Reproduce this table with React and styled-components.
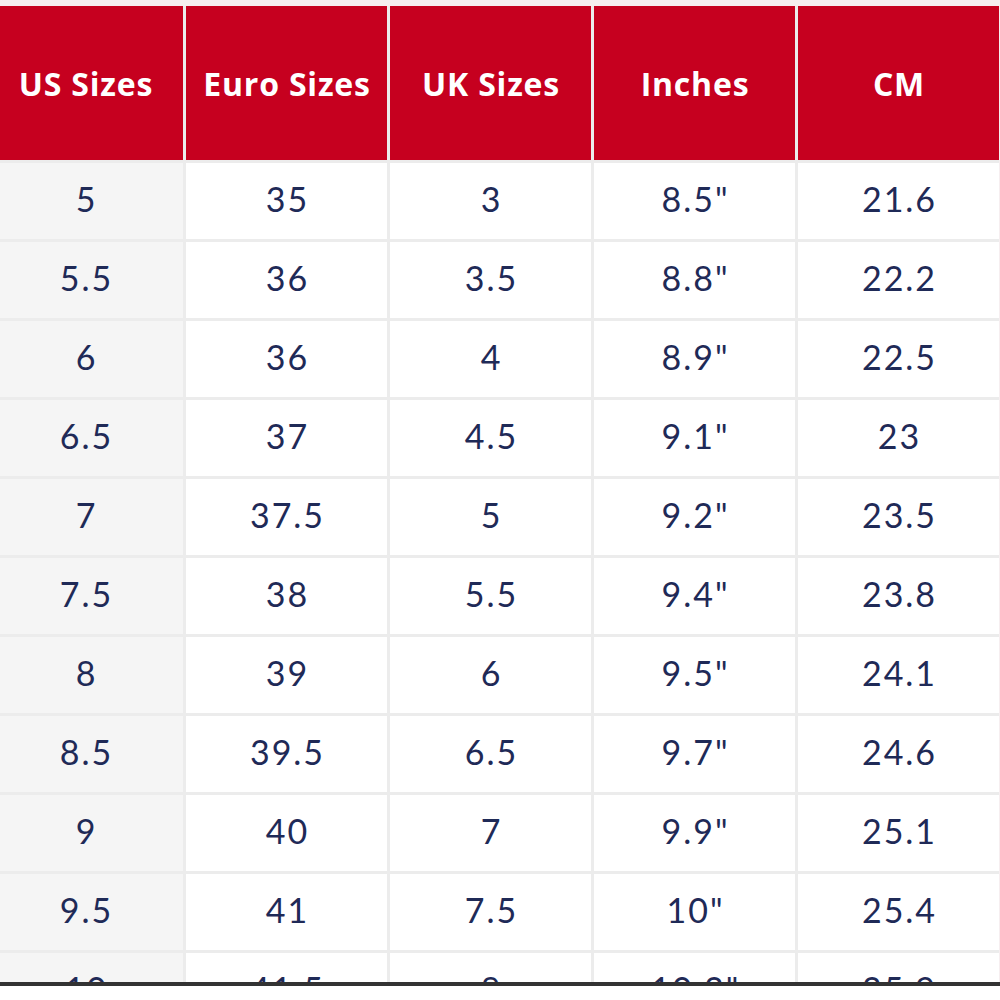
import React from 'react';
import styled, { createGlobalStyle } from 'styled-components';

const GlobalStyle = createGlobalStyle`
  html, body {
    margin: 0;
    padding: 0;
    background: #ffffff;
  }
`;

const headers = ['US Sizes', 'Euro Sizes', 'UK Sizes', 'Inches', 'CM'];

const rows = [
  ['5', '35', '3', '8.5"', '21.6'],
  ['5.5', '36', '3.5', '8.8"', '22.2'],
  ['6', '36', '4', '8.9"', '22.5'],
  ['6.5', '37', '4.5', '9.1"', '23'],
  ['7', '37.5', '5', '9.2"', '23.5'],
  ['7.5', '38', '5.5', '9.4"', '23.8'],
  ['8', '39', '6', '9.5"', '24.1'],
  ['8.5', '39.5', '6.5', '9.7"', '24.6'],
  ['9', '40', '7', '9.9"', '25.1'],
  ['9.5', '41', '7.5', '10"', '25.4'],
  ['10', '41.5', '8', '10.3"', '25.9'],
];

const Page = styled.div`
  width: 1000px;
  height: 1000px;
  background: #ffffff;
  overflow: hidden;
`;

const Frame = styled.div`
  height: 976px;
  padding-top: 6px;
  background: #f6eef0;
  overflow: hidden;
  border-bottom: 4px solid #333333;
`;

const Grid = styled.div`
  display: grid;
  grid-template-columns: 183px repeat(4, 201px);
  grid-auto-rows: 76px;
  grid-template-rows: 154px;
  gap: 3px;
  width: 999px;
  background: #ececec;
`;

const HeadCell = styled.div`
  display: flex;
  align-items: center;
  justify-content: center;
  padding: 0 ${(p) => (p.$first ? '12px' : '0')} 0 1px;
  background: #c6001f;
  color: #ffffff;
  font-family: "Open Sans", Lato, sans-serif;
  font-weight: 700;
  font-size: 32px;
  letter-spacing: 0.8px;
`;

const Cell = styled.div`
  display: flex;
  align-items: center;
  justify-content: center;
  padding: 0 ${(p) => (p.$first ? '12px' : '0')} 5px 2px;
  background: ${(p) => (p.$first ? '#f5f5f5' : '#ffffff')};
  color: #1f2a57;
  font-family: Lato, "Open Sans", sans-serif;
  font-size: 34px;
  letter-spacing: 2px;
`;

const App = () => (
  <Page>
    <GlobalStyle />
    <Frame>
      <Grid>
        {headers.map((h, j) => (
          <HeadCell key={h} $first={j === 0}>{h}</HeadCell>
        ))}
        {rows.map((row, i) => row.map((v, j) => (
          <Cell key={`${i}-${j}`} $first={j === 0}>{v}</Cell>
        )))}
      </Grid>
    </Frame>
  </Page>
);

export default App;
